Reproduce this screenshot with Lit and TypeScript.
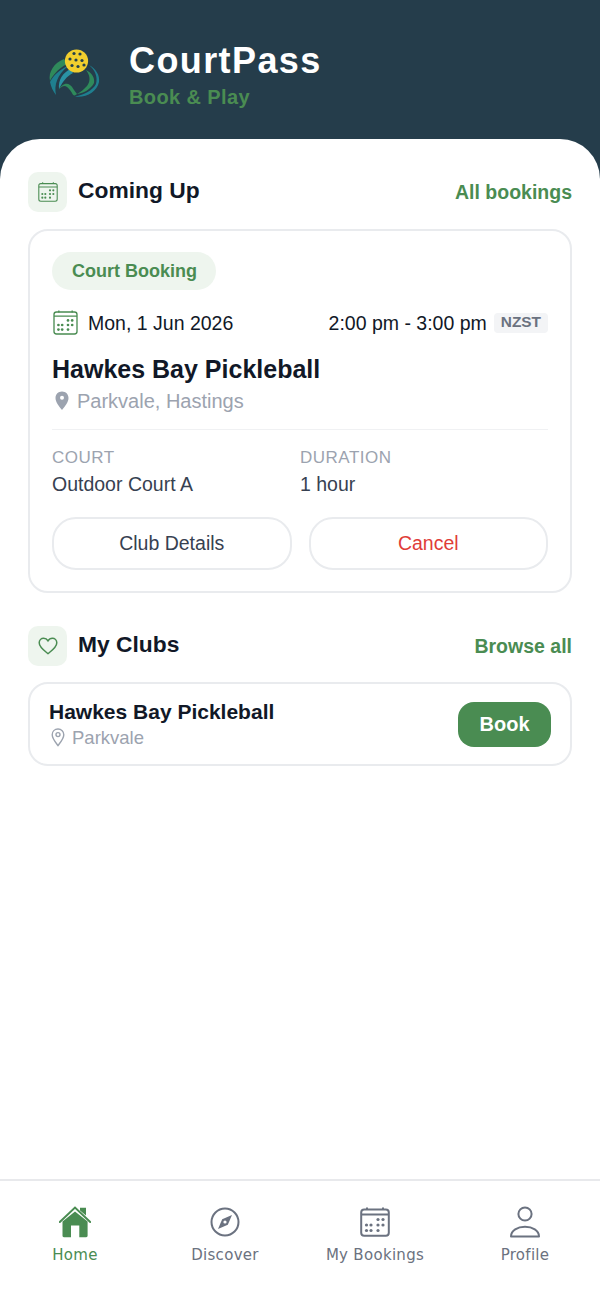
import { LitElement, html, css, svg } from 'lit';
import { customElement } from 'lit/decorators.js';

const calendarIcon = (size: number, stroke: number) => html`
  <svg width=${size} height=${size} viewBox="0 0 30 30" fill="none" stroke="currentColor">
    <rect x="1.2" y="2.4" width="27.6" height="26.4" rx="3" stroke-width=${stroke}></rect>
    <path d="M1.2 7.4H28.8M7 0.5V3M23 0.5V3" stroke-width=${stroke}></path>
    <g fill="currentColor" stroke="none">
      ${[
        [18, 12.5], [23, 12.5],
        [6.5, 18], [11, 18], [18, 18], [23, 18],
        [6.5, 23.5], [11, 23.5], [18, 23.5],
      ].map(([x, y]) => svg`<circle cx=${x} cy=${y} r="1.6"></circle>`)}
    </g>
  </svg>
`;

const heartIcon = html`
  <svg width="20" height="20" viewBox="0 0 20 20" fill="none" stroke="currentColor" stroke-width="1.5">
    <path d="M10 17.6C6.5 14.8 1.2 11.4 1.2 6.8C1.2 4 3.3 2.2 5.6 2.2C7.4 2.2 9 3.1 10 4.8C11 3.1 12.6 2.2 14.4 2.2C16.7 2.2 18.8 4 18.8 6.8C18.8 11.4 13.5 14.8 10 17.6Z"></path>
  </svg>
`;

const pinFilled = html`
  <svg width="14" height="20" viewBox="0 0 14 20">
    <path fill="#9ca3af" d="M7 0.5C3.2 0.5 0.5 3.3 0.5 6.9C0.5 11.2 4.6 15.9 7 19C9.4 15.9 13.5 11.2 13.5 6.9C13.5 3.3 10.8 0.5 7 0.5Z"></path>
    <circle cx="7" cy="6.8" r="2" fill="#fff"></circle>
  </svg>
`;

const pinOutline = html`
  <svg width="14" height="19" viewBox="0 0 14 19" fill="none" stroke="#9ca3af" stroke-width="1.4">
    <path d="M7 1C3.6 1 1.2 3.5 1.2 6.7C1.2 10.4 4.8 14.7 7 17.6C9.2 14.7 12.8 10.4 12.8 6.7C12.8 3.5 10.4 1 7 1Z"></path>
    <circle cx="7" cy="6.6" r="2"></circle>
  </svg>
`;

const homeIcon = html`
  <svg width="32" height="32" viewBox="0 0 32 32">
    <path fill="currentColor" d="M21 1.8H27V9.5L21 4.5Z"></path>
    <path fill="none" stroke="currentColor" stroke-width="2" stroke-linecap="round" d="M0.8 16L16 1.6L31.2 16"></path>
    <path fill="currentColor" d="M3.5 15.6L16 5.6L28.6 15.6V29.8C28.6 30.6 28 31.2 27.2 31.2H20.3V19.5H12V31.2H4.9C4.1 31.2 3.5 30.6 3.5 29.8Z"></path>
  </svg>
`;

const compassIcon = html`
  <svg width="30" height="30" viewBox="0 0 30 30">
    <circle cx="15" cy="15" r="13.5" fill="none" stroke="currentColor" stroke-width="2"></circle>
    <path fill="currentColor" d="M22 8L17.8 17.8L8 22L12.2 12.2Z"></path>
    <circle cx="15" cy="15" r="1.6" fill="#fff"></circle>
  </svg>
`;

const profileIcon = html`
  <svg width="30" height="32" viewBox="0 0 30 32" fill="none" stroke="currentColor" stroke-width="2">
    <circle cx="15" cy="8" r="6.6"></circle>
    <path stroke-linejoin="round" d="M1 30.5C1 24.5 7.5 20.8 15 20.8C22.5 20.8 29 24.5 29 30.5Z"></path>
  </svg>
`;

// logo drawn on a 70x70 box, ball sits top centre over the swooshes
const logo = html`
  <svg class="logo" width="70" height="70" viewBox="0 0 70 70">
    <path fill="#2f8a5b" d="M24 19C14 23 8 32 10 41C12 37 17 29 27 24Z"></path>
    <path fill="#1f7f8f" d="M10 42C11 47 13 51 16 55C14 45 17 35 28 26C19 30 13 36 10 42Z"></path>
    <path fill="#2a93a5" d="M31 29C23 32 18 40 19 49C23 41 27 36 33 33Z"></path>
    <path fill="#2f8a5b" d="M18.5 50C21 45 26 42 30 45C33 47 34 51 37 54C35 56 33 56 32 53C30 50 28 47 25 46C22 46 20 48 18.5 50Z"></path>
    <path fill="#1f7f8f" d="M49 25C55 30 58 37 56 44C53 50 44 55 35 56.5C46 58 57 52 59 42C60 35 56 29 49 25Z"></path>
    <path fill="#2f8a5b" d="M46 30C50 35 51 41 47 46C44 49 41 52 37 54C44 53 51 49 54 43C55 38 52 33 46 30Z"></path>
    <circle cx="36.5" cy="21" r="11.6" fill="#f2cf2e"></circle>
    <g fill="#24404c">
      ${[
        [34, 13.5], [40, 14], [30, 19], [36, 20], [42, 20.5],
        [32, 25.5], [38, 26.5], [44, 25],
      ].map(([x, y]) => svg`<circle cx=${x} cy=${y} r="1.6"></circle>`)}
    </g>
  </svg>
`;

@customElement('app-root')
export class AppRoot extends LitElement {
  static styles = css`
    :host {
      display: block;
      width: 600px;
      height: 1298px;
      font-family: 'Liberation Sans', Arial, sans-serif;
      background: #253d4b;
    }
    .page {
      display: flex;
      flex-flow: column;
      height: 100%;
    }
    .header {
      height: 139px;
      box-sizing: border-box;
      padding: 40px 0 0 40px;
      display: flex;
      gap: 19px;
    }
    .logo {
      flex: none;
    }
    .brand-name {
      font-size: 36px;
      line-height: 42px;
      font-weight: 700;
      letter-spacing: 1.4px;
      color: #fff;
    }
    .brand-sub {
      font-size: 20px;
      line-height: 30px;
      font-weight: 700;
      letter-spacing: 0.4px;
      color: #4a8c52;
    }
    .sheet {
      flex: 1;
      background: #fff;
      border-radius: 40px 40px 0 0;
      padding: 33px 28px 0;
    }
    .section-head {
      display: flex;
      align-items: center;
      height: 40px;
      gap: 11px;
      margin-bottom: 16px;
    }
    .section-icon {
      width: 39px;
      height: 40px;
      border-radius: 10px;
      background: #eef5ee;
      color: #4a8c52;
      display: flex;
      align-items: center;
      justify-content: center;
    }
    .section-title {
      flex: 1;
      font-size: 22.8px;
      font-weight: 700;
      color: #111827;
      padding-bottom: 4px;
    }
    .section-link {
      font-size: 19.5px;
      font-weight: 700;
      color: #4a8c52;
    }
    .card {
      border: 2px solid #e9ebee;
      border-radius: 20px;
      background: #fff;
    }
    .booking {
      height: 364px;
      box-sizing: border-box;
      padding: 21px 22px;
      margin: 17px 0 33px;
    }
    .section-head:first-child {
      margin-bottom: 0;
    }
    .pill {
      display: inline-block;
      height: 38px;
      line-height: 38px;
      padding: 0 19px 0 20px;
      border-radius: 19px;
      background: #eef5ee;
      color: #4a8c52;
      font-size: 18px;
      font-weight: 700;
    }
    .when {
      display: flex;
      align-items: center;
      height: 26px;
      margin-top: 20px;
      font-size: 19.5px;
      color: #111827;
    }
    .when svg {
      color: #4a8c52;
      margin: 0 10px 2px 1px;
    }
    .date {
      flex: 1;
    }
    .zone {
      margin-left: 7px;
      height: 20px;
      line-height: 18px;
      padding: 0 7px;
      border-radius: 4px;
      background: #f3f4f6;
      color: #6b7280;
      font-size: 15.4px;
      font-weight: 700;
    }
    .club-name {
      margin-top: 18px;
      font-size: 25px;
      line-height: 30px;
      font-weight: 700;
      color: #111827;
    }
    .place {
      display: flex;
      align-items: center;
      gap: 8px;
      margin-top: 4px;
      padding-left: 3px;
      font-size: 20px;
      line-height: 26px;
      color: #9ca3af;
    }
    .facts {
      display: grid;
      grid-template-columns: 248px 1fr;
      border-top: 1px solid #f0f1f3;
      margin-top: 15px;
      padding-top: 18px;
    }
    .fact-label {
      font-size: 17px;
      line-height: 20px;
      letter-spacing: 0.5px;
      color: #9ca3af;
    }
    .fact-value {
      margin-top: 4px;
      font-size: 19.5px;
      line-height: 24px;
      color: #374151;
    }
    .actions {
      display: grid;
      grid-template-columns: 1fr 1fr;
      gap: 17px;
      margin-top: 21px;
    }
    .btn {
      height: 53px;
      box-sizing: border-box;
      border: 2px solid #e9ebee;
      border-radius: 24px;
      background: #fff;
      font: 19.5px 'Liberation Sans', Arial, sans-serif;
      color: #374151;
    }
    .btn.danger {
      color: #e03c38;
    }
    .club-row {
      height: 84px;
      box-sizing: border-box;
      padding: 0 19px 0 19px;
      display: flex;
      align-items: center;
      justify-content: space-between;
    }
    .club-row-name {
      font-size: 21px;
      line-height: 26px;
      font-weight: 700;
      color: #111827;
    }
    .club-row-place {
      display: flex;
      align-items: center;
      gap: 7px;
      margin-top: 1px;
      padding-left: 2px;
      font-size: 18.5px;
      line-height: 24px;
      color: #9ca3af;
    }
    .book {
      width: 93px;
      height: 45px;
      border: 0;
      border-radius: 16px;
      background: #4a8c52;
      color: #fff;
      font: 700 20px 'Liberation Sans', Arial, sans-serif;
    }
    .nav {
      height: 119px;
      box-sizing: border-box;
      background: #fff;
      border-top: 2px solid #e8e9ec;
      display: grid;
      grid-template-columns: repeat(4, 1fr);
    }
    .nav-item {
      display: flex;
      flex-flow: column;
      align-items: center;
      padding-top: 24px;
      color: #6b7280;
      font-family: 'DejaVu Sans', sans-serif;
      font-size: 15px;
      letter-spacing: 0.3px;
    }
    .nav-item.active {
      color: #4a8c52;
    }
    .nav-icon {
      height: 34px;
      display: flex;
      align-items: center;
      margin-bottom: 7px;
    }
  `;

  render() {
    return html`
      <div class="page">
        <header class="header">
          ${logo}
          <div>
            <div class="brand-name">CourtPass</div>
            <div class="brand-sub">Book &amp; Play</div>
          </div>
        </header>

        <main class="sheet">
          <div class="section-head">
            <div class="section-icon">${calendarIcon(20, 1.6)}</div>
            <div class="section-title">Coming Up</div>
            <div class="section-link">All bookings</div>
          </div>

          <div class="card booking">
            <span class="pill">Court Booking</span>
            <div class="when">
              ${calendarIcon(25, 1.6)}
              <span class="date">Mon, 1 Jun 2026</span>
              <span>2:00 pm - 3:00 pm</span>
              <span class="zone">NZST</span>
            </div>
            <div class="club-name">Hawkes Bay Pickleball</div>
            <div class="place">${pinFilled}<span>Parkvale, Hastings</span></div>
            <div class="facts">
              <div>
                <div class="fact-label">COURT</div>
                <div class="fact-value">Outdoor Court A</div>
              </div>
              <div>
                <div class="fact-label">DURATION</div>
                <div class="fact-value">1 hour</div>
              </div>
            </div>
            <div class="actions">
              <button class="btn">Club Details</button>
              <button class="btn danger">Cancel</button>
            </div>
          </div>

          <div class="section-head">
            <div class="section-icon">${heartIcon}</div>
            <div class="section-title">My Clubs</div>
            <div class="section-link">Browse all</div>
          </div>

          <div class="card club-row">
            <div>
              <div class="club-row-name">Hawkes Bay Pickleball</div>
              <div class="club-row-place">${pinOutline}<span>Parkvale</span></div>
            </div>
            <button class="book">Book</button>
          </div>
        </main>

        <nav class="nav">
          <div class="nav-item active"><div class="nav-icon">${homeIcon}</div>Home</div>
          <div class="nav-item"><div class="nav-icon">${compassIcon}</div>Discover</div>
          <div class="nav-item"><div class="nav-icon">${calendarIcon(30, 2)}</div>My Bookings</div>
          <div class="nav-item"><div class="nav-icon">${profileIcon}</div>Profile</div>
        </nav>
      </div>
    `;
  }
}
